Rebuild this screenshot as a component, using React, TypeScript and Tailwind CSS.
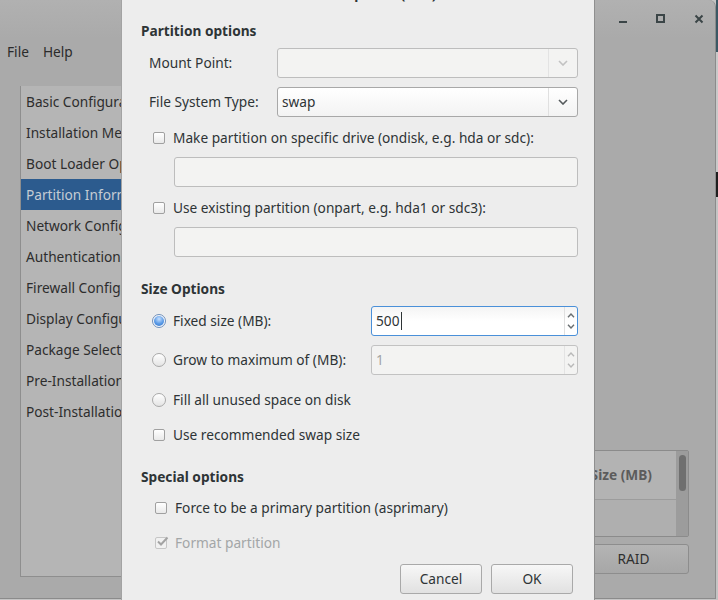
import clsx from 'clsx';

function Chevron({ up = false, className = '' }: { up?: boolean; className?: string }) {
  return (
    <svg width="10" height="6" viewBox="0 0 10 6" className={className}>
      <path
        d={up ? 'M1 5 L5 1 L9 5' : 'M1 1 L5 5 L9 1'}
        fill="none"
        stroke="currentColor"
        strokeWidth="1.6"
      />
    </svg>
  );
}

function SmallChevron({ up = false }: { up?: boolean }) {
  return (
    <svg width="8" height="5" viewBox="0 0 8 5">
      <path
        d={up ? 'M1 4.2 L4 1 L7 4.2' : 'M1 0.8 L4 4 L7 0.8'}
        fill="none"
        stroke="currentColor"
        strokeWidth="1.4"
      />
    </svg>
  );
}

function CheckBox({ checked = false, disabled = false }: { checked?: boolean; disabled?: boolean }) {
  return (
    <span
      className={clsx(
        'relative flex h-[12px] w-[12px] shrink-0 items-center justify-center rounded-[2px] border',
        disabled
          ? 'border-[#c6c6c6] bg-[#f1f1f1] text-[#a3a3a3]'
          : 'border-[#a0a0a0] bg-gradient-to-b from-white to-[#e9e9e9] text-[#2e3436]'
      )}
    >
      {checked && (
        <svg width="13" height="11" viewBox="0 0 13 11" className="absolute left-[0px] top-[-2px]">
          <path d="M2 5.5 L5 8.5 L11.5 1.5" fill="none" stroke="currentColor" strokeWidth="2" />
        </svg>
      )}
    </span>
  );
}

function Radio({ checked = false }: { checked?: boolean }) {
  return (
    <span
      className={clsx(
        'flex h-[14px] w-[14px] shrink-0 items-center justify-center rounded-full border',
        checked
          ? 'border-[#6f8fba] bg-[#f4f7fb]'
          : 'border-[#a9a9a9] bg-gradient-to-b from-white to-[#e4e4e4]'
      )}
    >
      {checked && (
        <span className="h-[10px] w-[10px] rounded-full bg-[radial-gradient(circle_at_50%_30%,#c8e1ff,#5a9ae6_55%,#3676c8)]" />
      )}
    </span>
  );
}

function Combo({ value, disabled = false }: { value?: string; disabled?: boolean }) {
  return (
    <div
      className={clsx(
        'flex h-[30px] flex-1 items-stretch rounded-[3px] border',
        disabled
          ? 'border-[#bdbdbd] bg-[#f3f3f2]'
          : 'border-[#a8a8a8] bg-gradient-to-b from-white to-[#f3f3f3]'
      )}
    >
      <div className="flex flex-1 items-center pl-[4px] text-[#2e3436]">{value}</div>
      <div
        className={clsx(
          'flex w-[29px] items-center justify-center border-l',
          disabled ? 'border-[#e3e3e3] text-[#c2c2c2]' : 'border-[#e0e0e0] text-[#555a5c]'
        )}
      >
        <Chevron />
      </div>
    </div>
  );
}

function Spin({ value, focused = false }: { value: string; focused?: boolean }) {
  return (
    <div
      className={clsx(
        'flex h-[30px] flex-1 items-stretch rounded-[3px] border',
        focused
          ? 'border-[#4a90d9] bg-gradient-to-b from-[#f4f4f4] via-white to-white'
          : 'border-[#c2c2c2] bg-[#f3f3f2]'
      )}
    >
      <div
        className={clsx(
          'flex flex-1 items-center pl-[4px]',
          focused ? 'text-[#2e3436]' : 'text-[#a3a3a3]'
        )}
      >
        {value}
        {focused && <span className="ml-[1px] h-[18px] w-[1px] bg-[#2e3436]" />}
      </div>
      <div
        className={clsx(
          'flex w-[13px] flex-col items-center justify-center gap-[6px] border-l',
          focused ? 'border-[#e0e0e0] text-[#6a6f71]' : 'border-[#e3e3e3] text-[#b9b9b9]'
        )}
      >
        <SmallChevron up />
        <SmallChevron />
      </div>
    </div>
  );
}

function Entry() {
  return <div className="ml-[33px] mt-[9px] h-[30px] rounded-[3px] border border-[#bdbdbd] bg-[#f3f3f2]" />;
}

function Button({ label }: { label: string }) {
  return (
    <div className="flex h-[30px] w-[82px] items-center justify-center rounded-[3px] border border-[#a9a9a9] bg-gradient-to-b from-[#f7f7f7] to-[#e1e1e1] text-[#2e3436]">
      {label}
    </div>
  );
}

const pages = [
  'Basic Configuration',
  'Installation Method',
  'Boot Loader Options',
  'Partition Information',
  'Network Configuration',
  'Authentication',
  'Firewall Configuration',
  'Display Configuration',
  'Package Selection',
  'Pre-Installation Script',
  'Post-Installation Script',
];

export default function App() {
  return (
    <div className="relative h-[600px] w-[718px] overflow-hidden bg-[#c4c4c4] font-['Noto_Sans',sans-serif] text-[13.7px]">
      <div className="flex h-full">
        {/* parent window, insensitive behind the dialog */}
        <div className="flex h-[599px] w-[716px] flex-col rounded-tr-[7px] border-b border-r border-[#8b8b8b] bg-[#aaaaaa] text-[#2f2f2f]">
          <div className="flex h-[38px] items-center justify-end gap-[22px] rounded-tr-[7px] bg-gradient-to-b from-[#b1b1b1] to-[#aaaaaa] pr-[8px] text-[#3b4547]">
            <svg width="16" height="16" viewBox="0 0 16 16">
              <rect x="4" y="10" width="8" height="2" fill="currentColor" />
            </svg>
            <svg width="16" height="16" viewBox="0 0 16 16">
              <rect x="4" y="4" width="7" height="7" fill="none" stroke="currentColor" strokeWidth="2" />
            </svg>
            <svg width="16" height="16" viewBox="0 0 16 16">
              <path d="M4.5 4.5 L11.5 11.5 M11.5 4.5 L4.5 11.5" stroke="currentColor" strokeWidth="2" />
            </svg>
          </div>
          <div className="flex h-[28px] items-center gap-[14px] pl-[7px] text-[#2b2b2b]">
            <span>File</span>
            <span>Help</span>
          </div>
          <div className="flex flex-1 pb-[21px] pt-[20px]">
            <div className="ml-[20px] w-[101px] shrink-0 overflow-hidden border-b border-l border-[#8e8e8e] bg-[#b5b5b5]">
              {pages.map((p, i) => (
                <div
                  key={p}
                  className={clsx(
                    'h-[31px] whitespace-nowrap pl-[5px] leading-[31px]',
                    i === 3 ? 'bg-[#2c5b8e] text-[#c5ccd4]' : 'text-[#2d2d2d]'
                  )}
                >
                  {p}
                </div>
              ))}
            </div>
            <div className="flex flex-1 flex-col items-end justify-end gap-[7px] pb-[3px] pr-[26px]">
              <div className="flex h-[87px] w-[200px] rounded-[2px] border border-[#8b8b8b]">
                <div className="flex flex-1 flex-col">
                  <div className="flex h-[49px] items-center justify-end border-b border-[#9c9c9c] bg-[#b3b3b3] pr-[24px] font-bold text-[#5c5c5c]">
                    Size (MB)
                  </div>
                  <div className="flex-1 bg-[#afafaf]" />
                </div>
                <div className="w-[12px] bg-[#9c9c9c] pl-[3px] pt-[4px]">
                  <div className="h-[36px] w-[7px] rounded-full bg-[#6f6f6f]" />
                </div>
              </div>
              <div className="flex h-[30px] w-[111px] items-center justify-center rounded-[3px] border border-[#8d8d8d] bg-gradient-to-b from-[#b4b4b4] to-[#a7a7a7] text-[#2f2f2f]">
                RAID
              </div>
            </div>
          </div>
        </div>
        <div className="flex w-[2px] flex-col">
          <div className="h-[52px] bg-[#3b5864]" />
          <div className="h-[120px] bg-[#c9c9c9]" />
          <div className="h-[25px] bg-[#1f1f1f]" />
          <div className="flex-1 bg-[#c4c4c4]" />
        </div>
      </div>

      {/* modal dialog */}
      <div className="absolute left-[121px] top-0 flex h-[620px] w-[474px] flex-col border-l border-r border-l-[#a3a3a3] border-r-[#8f8f8f] bg-[#ededed] pl-[19px] pr-[16px] text-[#2e3436]">
        <div className="absolute left-0 right-0 top-[-14px] text-center font-bold leading-[16px]">
          Partition Options (Edit)
        </div>

        <div className="mt-[21px] font-bold leading-[20px]">Partition options</div>
        <div className="mt-[7px] flex h-[30px] items-center pl-[8px]">
          <span className="w-[128px]">Mount Point:</span>
          <Combo disabled />
        </div>
        <div className="mt-[9px] flex h-[30px] items-center pl-[8px]">
          <span className="w-[128px]">File System Type:</span>
          <Combo value="swap" />
        </div>
        <div className="mt-[11px] flex h-[20px] items-center gap-[8px] pl-[12px]">
          <CheckBox />
          <span>Make partition on specific drive (ondisk, e.g. hda or sdc):</span>
        </div>
        <Entry />
        <div className="mt-[11px] flex h-[20px] items-center gap-[8px] pl-[12px]">
          <CheckBox />
          <span>Use existing partition (onpart, e.g. hda1 or sdc3):</span>
        </div>
        <Entry />

        <div className="mt-[22px] font-bold leading-[20px]">Size Options</div>
        <div className="mt-[7px] flex h-[30px] items-center gap-[7px] pl-[11px]">
          <Radio checked />
          <span className="w-[191px]">Fixed size (MB):</span>
          <Spin value="500" focused />
        </div>
        <div className="mt-[9px] flex h-[30px] items-center gap-[7px] pl-[11px]">
          <Radio />
          <span className="w-[191px]">Grow to maximum of (MB):</span>
          <Spin value="1" />
        </div>
        <div className="mt-[15px] flex h-[20px] items-center gap-[7px] pl-[11px]">
          <Radio />
          <span>Fill all unused space on disk</span>
        </div>
        <div className="mt-[15px] flex h-[20px] items-center gap-[8px] pl-[12px]">
          <CheckBox />
          <span>Use recommended swap size</span>
        </div>

        <div className="mt-[22px] font-bold leading-[20px]">Special options</div>
        <div className="mt-[11px] flex h-[20px] items-center gap-[8px] pl-[14px]">
          <CheckBox />
          <span>Force to be a primary partition (asprimary)</span>
        </div>
        <div className="mt-[15px] flex h-[20px] items-center gap-[8px] pl-[14px] text-[#a3a6a7]">
          <CheckBox checked disabled />
          <span>Format partition</span>
        </div>

        <div className="mt-[11px] flex justify-end gap-[9px] pr-[5px]">
          <Button label="Cancel" />
          <Button label="OK" />
        </div>
      </div>
    </div>
  );
}
